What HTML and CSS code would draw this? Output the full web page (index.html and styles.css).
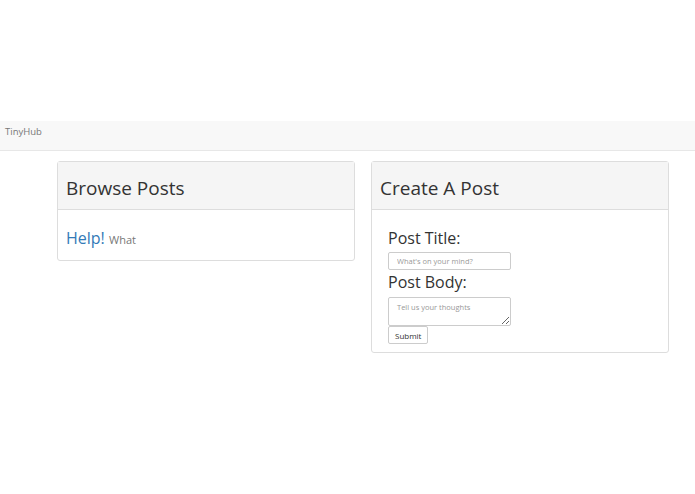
FILE: index.html
```html
<!DOCTYPE html>
<html>
<head>
<meta charset="utf-8">
<link rel="stylesheet" href="styles.css">
</head>
<body>
<div class="top-space"></div>
<nav class="navbar"><span class="brand">TinyHub</span></nav>
<div class="container">
  <div class="panel">
    <div class="panel-heading"><h2>Browse Posts</h2></div>
    <div class="panel-body browse">
      <a class="post-title">Help!</a> <span class="post-body">What</span>
    </div>
  </div>
  <div class="panel">
    <div class="panel-heading"><h2>Create A Post</h2></div>
    <div class="panel-body create">
      <label class="label">Post Title:</label>
      <input class="field" type="text" placeholder="What's on your mind?">
      <label class="label">Post Body:</label>
      <textarea class="field area" placeholder="Tell us your thoughts"></textarea>
      <button class="btn">Submit</button>
    </div>
  </div>
</div>
</body>
</html>
```
FILE: styles.css
```css
* { box-sizing: border-box; }
body {
  margin: 0;
  font-family: "Open Sans", "Noto Sans", sans-serif;
  color: #333;
  background: #fff;
}
.top-space { height: 121px; }
.navbar {
  height: 30px;
  background: #f8f8f8;
  border-bottom: 1px solid #e7e7e7;
  display: flex;
  align-items: flex-start;
  padding: 5px 5px 0;
}
.brand { font-size: 9.5px; color: #777; line-height: 12px; }
.container {
  display: flex;
  gap: 16px;
  margin-top: 10px;
  padding-left: 57px;
  align-items: flex-start;
}
.panel {
  width: 298px;
  border: 1px solid #ddd;
  border-radius: 3px;
  background: #fff;
}
.panel-heading {
  background: #f5f5f5;
  border-bottom: 1px solid #ddd;
  height: 48px;
  display: flex;
  align-items: center;
  padding: 0 8px;
}
.panel-heading h2 {
  margin: 0;
  font-size: 19px;
  font-weight: 400;
  color: #333;
  padding-top: 4px;
}
.browse { padding: 17px 8px 11px; }
.post-title { font-size: 16px; color: #337ab7; }
.post-body { font-size: 11px; color: #777; }
.create {
  padding: 17px 16px 8px;
  display: flex;
  flex-direction: column;
  align-items: flex-start;
}
.label { font-size: 16px; color: #333; line-height: 22px; }
.field {
  width: 123px;
  height: 18px;
  border: 1px solid #ccc;
  border-radius: 2px;
  font-family: inherit;
  font-size: 7.5px;
  padding: 2px 8px;
  margin: 3px 0 1px;
}
.field::placeholder { color: #999; }
.area { height: 29px; resize: vertical; margin: 4px 0 0; padding-top: 4px; }
.btn {
  font-family: inherit;
  font-size: 8px;
  color: #333;
  background: #fff;
  border: 1px solid #ccc;
  border-radius: 2px;
  height: 18px;
  padding: 0 6px;
}
```
